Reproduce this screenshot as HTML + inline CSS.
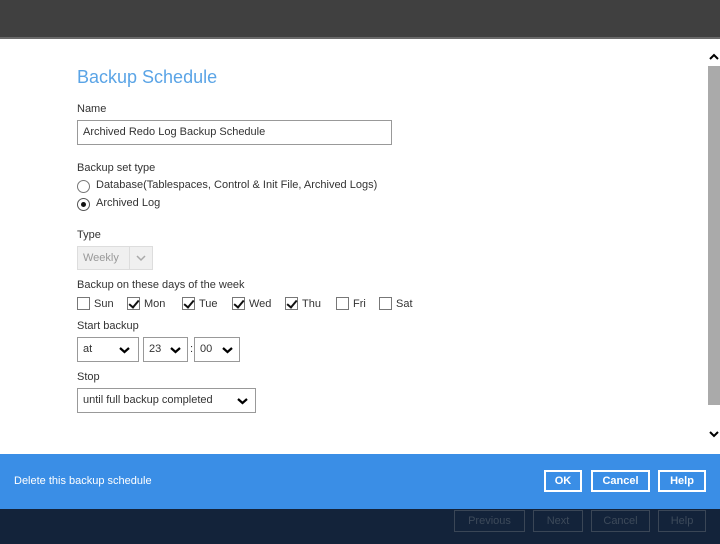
<!DOCTYPE html>
<html><head><meta charset="utf-8"><style>
*{margin:0;padding:0;box-sizing:border-box}
body{width:720px;height:544px;overflow:hidden;background:#fff;font-family:"Liberation Sans",sans-serif;font-size:11px;color:#333;position:relative}
.a{position:absolute;white-space:nowrap}
.sel{position:absolute;border:1px solid #999;background:#fff;height:23px;font-size:11px;padding:5px 0 0 5px}
.chev{position:absolute;top:5px}
.cb{display:inline-block;width:13px;height:13px;border:1px solid #777;vertical-align:-3px;margin-right:4px;position:relative;background:#fff}
.ck::after{content:"";position:absolute;left:3px;top:0px;width:4px;height:8px;border:solid #111;border-width:0 2px 2px 0;transform:rotate(40deg)}
.day{position:absolute;top:297px}
.btn{position:absolute;border:2px solid #fff;color:#fff;font-weight:bold;font-size:11px;text-align:center;height:22px;line-height:18px;top:470px}
.bb{position:absolute;border:1px solid #3a4656;color:#3d4a5a;font-size:11px;text-align:center;height:22px;line-height:20px;top:510px}
</style></head><body>
<div class="a" style="left:0;top:0;width:720px;height:37px;background:#404040"></div>
<div class="a" style="left:0;top:37px;width:720px;height:2px;background:#6a6a6a"></div>
<div class="a" style="left:708px;top:66px;width:12px;height:339px;background:#aaa"></div>
<svg class="a" style="left:709px;top:53px" width="10" height="7"><path d="M1 6L5 2L9 6" stroke="#000" stroke-width="2" fill="none"/></svg>
<svg class="a" style="left:709px;top:431px" width="10" height="7"><path d="M1 1L5 5L9 1" stroke="#000" stroke-width="2" fill="none"/></svg>

<div class="a" style="left:77px;top:67px;font-size:18px;color:#5aa4e6">Backup Schedule</div>
<div class="a" style="left:77px;top:103px">Name</div>
<div class="a" style="left:77px;top:120px;width:315px;height:25px;border:1px solid #999;padding:5px 0 0 5px">Archived Redo Log Backup Schedule</div>
<div class="a" style="left:77px;top:162px">Backup set type</div>
<div class="a" style="left:77px;top:180px;width:13px;height:13px;border:1px solid #777;border-radius:50%"></div>
<div class="a" style="left:96px;top:179px">Database(Tablespaces, Control &amp; Init File, Archived Logs)</div>
<div class="a" style="left:77px;top:198px;width:13px;height:13px;border:1px solid #555;border-radius:50%"><div style="position:absolute;left:3px;top:3px;width:5px;height:5px;background:#111;border-radius:50%"></div></div>
<div class="a" style="left:96px;top:197px">Archived Log</div>
<div class="a" style="left:77px;top:229px">Type</div>
<div class="sel" style="left:77px;top:246px;width:76px;height:24px;background:#f0f0f0;border-color:#ddd;color:#999">Weekly</div>
<div class="a" style="left:129px;top:247px;width:1px;height:22px;background:#ddd"></div>
<svg class="a" style="left:136px;top:255px" width="10" height="7"><path d="M1 1L5 5L9 1" stroke="#aaa" stroke-width="1.5" fill="none"/></svg>
<div class="a" style="left:77px;top:279px">Backup on these days of the week</div>
<div class="day" style="left:77px"><span class="cb"></span>Sun</div>
<div class="day" style="left:127px"><span class="cb ck"></span>Mon</div>
<div class="day" style="left:182px"><span class="cb ck"></span>Tue</div>
<div class="day" style="left:232px"><span class="cb ck"></span>Wed</div>
<div class="day" style="left:285px"><span class="cb ck"></span>Thu</div>
<div class="day" style="left:336px"><span class="cb"></span>Fri</div>
<div class="day" style="left:379px"><span class="cb"></span>Sat</div>
<div class="a" style="left:77px;top:320px">Start backup</div>
<div class="sel" style="left:77px;top:337px;width:62px;height:25px">at</div>
<svg class="a" style="left:119px;top:347px" width="11" height="7"><path d="M1 1L5.5 5L10 1" stroke="#000" stroke-width="2.2" fill="none"/></svg>
<div class="sel" style="left:143px;top:337px;width:45px;height:25px">23</div>
<svg class="a" style="left:170px;top:347px" width="11" height="7"><path d="M1 1L5.5 5L10 1" stroke="#000" stroke-width="2.2" fill="none"/></svg>
<div class="a" style="left:190px;top:343px">:</div>
<div class="sel" style="left:194px;top:337px;width:46px;height:25px">00</div>
<svg class="a" style="left:222px;top:347px" width="11" height="7"><path d="M1 1L5.5 5L10 1" stroke="#000" stroke-width="2.2" fill="none"/></svg>
<div class="a" style="left:77px;top:371px">Stop</div>
<div class="sel" style="left:77px;top:388px;width:179px;height:25px">until full backup completed</div>
<svg class="a" style="left:237px;top:398px" width="11" height="7"><path d="M1 1L5.5 5L10 1" stroke="#000" stroke-width="2.2" fill="none"/></svg>

<div class="a" style="left:0;top:454px;width:720px;height:55px;background:#3a8ee6"></div>
<div class="a" style="left:14px;top:475px;color:#fff">Delete this backup schedule</div>
<div class="btn" style="left:544px;width:38px">OK</div>
<div class="btn" style="left:591px;width:59px">Cancel</div>
<div class="btn" style="left:658px;width:48px">Help</div>
<div class="a" style="left:0;top:509px;width:720px;height:35px;background:#13233a"></div>
<div class="bb" style="left:454px;width:71px">Previous</div>
<div class="bb" style="left:533px;width:50px">Next</div>
<div class="bb" style="left:591px;width:59px">Cancel</div>
<div class="bb" style="left:658px;width:48px">Help</div>
</body></html>
